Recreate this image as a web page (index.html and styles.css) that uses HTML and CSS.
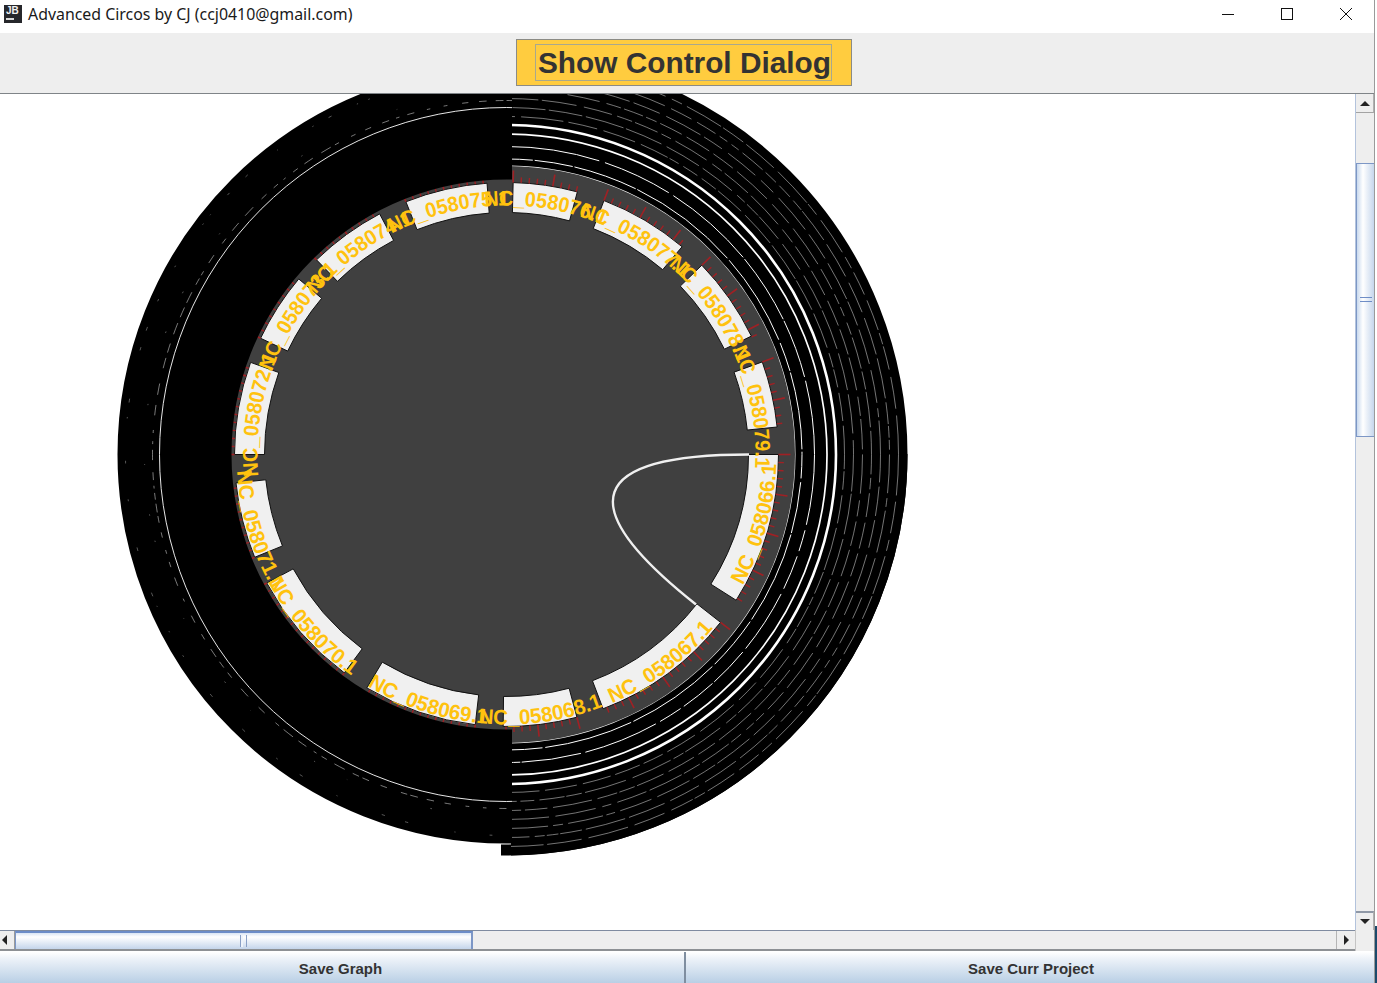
FILE: index.html
```html
<!DOCTYPE html>
<html lang="en">
<head>
    <meta charset="UTF-8">
    <title>Advanced Circos by CJ</title>
    <link rel="stylesheet" href="styles.css">
</head>
<body>
<div class="window">
    <div class="titlebar">
        <div class="app-icon"><span class="app-icon-text">JB</span><span class="app-icon-bar"></span></div>
        <div class="title-text">Advanced Circos by CJ (ccj0410@gmail.com)</div>
        <div class="win-buttons">
            <svg class="win-btn" width="14" height="14" viewBox="0 0 14 14"><path d="M1 7.5H13" stroke="#111" fill="none"/></svg>
            <svg class="win-btn" width="14" height="14" viewBox="0 0 14 14"><rect x="1.5" y="1.5" width="11" height="11" stroke="#111" fill="none"/></svg>
            <svg class="win-btn" width="14" height="14" viewBox="0 0 14 14"><path d="M1 1L13 13M13 1L1 13" stroke="#111" fill="none"/></svg>
        </div>
    </div>
    <div class="toolbar">
        <button class="control-button"><span class="control-label">Show Control Dialog</span></button>
    </div>
    <div class="scroll-pane">
        <div class="canvas">
            <svg id="circos" width="1355" height="836" viewBox="0 94 1355 836"></svg>
        </div>
        <div class="vbar">
            <div class="sb-btn sb-btn-up"><span class="arrow arrow-up"></span></div>
            <div class="vbar-gap-top"></div>
            <div class="vthumb"><span class="vgrip"></span></div>
            <div class="vbar-rest"></div>
            <div class="sb-btn sb-btn-down"><span class="arrow arrow-down"></span></div>
        </div>
        <div class="hbar">
            <div class="sb-btn sb-btn-left"><span class="arrow arrow-left"></span></div>
            <div class="hthumb"><span class="hgrip"></span></div>
            <div class="hbar-rest"></div>
            <div class="sb-btn sb-btn-right"><span class="arrow arrow-right"></span></div>
        </div>
        <div class="corner"></div>
    </div>
    <div class="bottom-buttons">
        <button class="save-button save-graph">Save Graph</button>
        <button class="save-button save-project">Save Curr Project</button>
    </div>
</div>
<div class="desktop-edge"></div>
<script src="script.js"></script>
</body>
</html>
```

FILE: styles.css
```css
* {
    box-sizing: border-box;
}

html, body {
    height: 100%;
}

body {
    margin: 0;
    display: flex;
    overflow: hidden;
    background-color: white;
    font-family: "Liberation Sans", Arial, sans-serif;
}

.window {
    width: 1375px;
    height: 983px;
    display: flex;
    flex-direction: column;
    border-right: 1px solid #9a9a9a;
}

.desktop-edge {
    width: 2px;
    height: 983px;
    background: linear-gradient(white 926px, #1b4a6b 926px);
}

/* title bar */
.titlebar {
    height: 33px;
    display: flex;
    align-items: center;
    padding-left: 4px;
    background-color: white;
}

.app-icon {
    width: 18px;
    height: 18px;
    margin-top: -5px;
    margin-right: 6px;
    background-color: #26272b;
    display: flex;
    flex-direction: column;
    padding: 1px 2px;
}

.app-icon-text {
    color: #f2f2f2;
    font-size: 10px;
    line-height: 10px;
    font-weight: bold;
}

.app-icon-bar {
    width: 8px;
    height: 2px;
    margin-top: 2px;
    background-color: #d8d8d8;
}

.title-text {
    flex: 1;
    margin-top: -6px;
    font-family: "Noto Sans", sans-serif;
    font-size: 15.9px;
    color: #1a1a1a;
}

.win-buttons {
    display: flex;
    gap: 45px;
    margin-top: -6px;
    padding-right: 21px;
}

.win-btn {
    display: block;
}

/* toolbar with yellow button */
.toolbar {
    height: 61px;
    display: flex;
    justify-content: center;
    padding: 6px 7px 7px 0;
    background-color: #eeeeee;
    border-bottom: 1px solid #7f8488;
}

.control-button {
    width: 336px;
    height: 47px;
    padding: 0;
    display: flex;
    align-items: center;
    justify-content: center;
    background-color: #ffcc3f;
    border: 1px solid #8b8b85;
    font-family: "Liberation Sans", Arial, sans-serif;
}

.control-label {
    display: block;
    height: 37px;
    padding: 0 0 0 2px;
    border: 1px solid #a8a88e;
    color: #333333;
    font-size: 29.8px;
    line-height: 36px;
    font-weight: bold;
    white-space: nowrap;
}

/* scroll pane */
.scroll-pane {
    flex: 1;
    display: grid;
    grid-template-columns: 1355px 19px;
    grid-template-rows: 836px 21px;
    min-height: 0;
}

.canvas {
    overflow: hidden;
    background-color: white;
}

#circos {
    display: block;
}

.seg-label {
    fill: #ffc20e;
    font-family: "Liberation Sans", Arial, sans-serif;
    font-size: 21px;
    font-weight: bold;
}

.vbar {
    display: flex;
    flex-direction: column;
    background-color: #eeeeee;
    border-left: 1px solid #b3c3dc;
}

.vbar-gap-top {
    height: 50px;
}

.vbar-rest {
    flex: 1;
}

.vthumb {
    height: 274px;
    display: flex;
    align-items: center;
    justify-content: center;
    background: linear-gradient(to right, #c9d9ee, #ffffff 35%, #c6d6ec);
    border: 1px solid #7d97c6;
    border-width: 1px 0 1px 1px;
}

.vgrip {
    width: 12px;
    height: 5px;
    margin-top: -1px;
    border-top: 1px solid #6f8dc6;
    border-bottom: 1px solid #6f8dc6;
}

.hbar {
    display: flex;
    background-color: #eeeeee;
    border-top: 1px solid #7f8ba0;
    border-bottom: 2px solid #8d9094;
}

.hthumb {
    width: 458px;
    display: flex;
    align-items: center;
    justify-content: center;
    background: linear-gradient(#d9e5f4, #ffffff 25%, #c4d5eb);
    border-left: 1px solid #7d97c6;
    border-right: 2px solid #7d97c6;
    border-top: 2px solid #6c8cc8;
}

.hgrip {
    width: 7px;
    height: 12px;
    border-left: 1px solid #8aa0c6;
    border-right: 1px solid #8aa0c6;
    box-shadow: inset 2px 0 0 #eef3fa;
}

.hbar-rest {
    flex: 1;
}

.corner {
    background-color: #eeeeee;
    border-left: 1px solid #c4c4c4;
}

.sb-btn {
    display: flex;
    align-items: center;
    justify-content: center;
    background-color: #eeeeee;
    flex-shrink: 0;
}

.sb-btn-up,
.sb-btn-down {
    height: 19px;
}

.sb-btn-up {
    border-bottom: 1px solid #a3a3a3;
    border-right: 1px solid #b0b0b0;
}

.sb-btn-down {
    border-top: 2px solid #8f98a6;
    border-right: 1px solid #b0b0b0;
}

.sb-btn-left {
    width: 15px;
    border-right: 1px solid #9a9a9a;
}

.sb-btn-right {
    width: 19px;
    border-left: 1px solid #b5b5b5;
}

.arrow {
    width: 0;
    height: 0;
    border-style: solid;
    border-color: transparent;
}

.arrow-up {
    border-width: 0 5px 5px 5px;
    border-bottom-color: #222;
}

.arrow-down {
    border-width: 5px 5px 0 5px;
    border-top-color: #222;
}

.arrow-left {
    border-width: 5px 5px 5px 0;
    border-right-color: #222;
    margin-right: 6px;
}

.arrow-right {
    border-width: 5px 0 5px 5px;
    border-left-color: #222;
}

/* save buttons */
.bottom-buttons {
    height: 32px;
    display: flex;
    padding-top: 1px;
    background-color: white;
}

.save-button {
    height: 31px;
    padding: 1px 0 0 0;
    border: none;
    background: linear-gradient(#ffffff, #eef3f9 20%, #b9cfe5);
    color: #333333;
    font-family: "Liberation Sans", Arial, sans-serif;
    font-size: 15px;
    font-weight: bold;
}

.save-graph {
    width: 686px;
    padding-right: 3px;
    border-right: 2px solid #7f8ea0;
}

.save-project {
    flex: 1;
    padding-left: 2px;
}
```

FILE: script.js
```js
// draws the circos plot into the svg
const NS = "http://www.w3.org/2000/svg";
const svg = document.getElementById("circos");
const CX = 506.5;
const CY = 454.5;

function el(name, attrs, parent) {
    const e = document.createElementNS(NS, name);
    for (const k in attrs) e.setAttribute(k, attrs[k]);
    (parent || svg).appendChild(e);
    return e;
}

function pt(r, deg) {
    const a = deg * Math.PI / 180;
    return [CX + r * Math.sin(a), CY - r * Math.cos(a)];
}

function arc(r, from, to) {
    const p0 = pt(r, from);
    const p1 = pt(r, to);
    const large = Math.abs(to - from) > 180 ? 1 : 0;
    const sweep = to > from ? 1 : 0;
    return `M${p0[0]} ${p0[1]}A${r} ${r} 0 ${large} ${sweep} ${p1[0]} ${p1[1]}`;
}

// name, segment start, segment end, label start angle
const segments = [
    ["NC_058076.1", 1.4, 15.1, 355],
    ["NC_058077.1", 21, 40.2, 17],
    ["NC_058078.1", 45.9, 64.2, 40.5],
    ["NC_058079.1", 70.1, 84.2, 65],
    ["NC_058066.1", 90, 122.4, 119],
    ["NC_058067.1", 128.1, 159.2, 157],
    ["NC_058068.1", 165, 180.7, 186],
    ["NC_058069.1", 186.6, 210.9, 211],
    ["NC_058070.1", 216.6, 241.8, 242],
    ["NC_058071.1", 247.8, 264, 266.5],
    ["NC_058072.1", 270, 289.8, 265],
    ["NC_058073.1", 295.3, 310.2, 289.5],
    ["NC_058074.1", 315.7, 332.2, 310],
    ["NC_058075.1", 338.3, 355.9, 332.5]
];

const defs = el("defs", {});
const clipRight = el("clipPath", {id: "clip-right"}, defs);
el("rect", {x: 511, y: 0, width: 900, height: 1000}, clipRight);
const clipLeft = el("clipPath", {id: "clip-left"}, defs);
el("rect", {x: 0, y: 0, width: 512, height: 1000}, clipLeft);
const clipLip = el("clipPath", {id: "clip-lip"}, defs);
el("rect", {x: 501, y: 454, width: 900, height: 600}, clipLip);

// dark disc
el("circle", {cx: CX, cy: CY, r: 288.5, fill: "#404040"});

// segments with ticks
segments.forEach(function (s) {
    const inner = pt(242, s[2]);
    const d = arc(272, s[1], s[2]) + `L${inner[0]} ${inner[1]}` + arc(242, s[2], s[1]).replace("M", "L") + "Z";
    el("path", {d: d, fill: "#f0f0f0", stroke: "#111", "stroke-width": 1});
    let n = 0;
    for (let a = s[1]; a <= s[2] + 0.2; a += 1.68) {
        const big = n % 5 === 0;
        const p0 = pt(272, a);
        const p1 = pt(big ? 284 : 277.5, a);
        el("line", {x1: p0[0], y1: p0[1], x2: p1[0], y2: p1[1], stroke: "#a02024", "stroke-width": big ? 1.6 : 1.4});
        n++;
    }
});

// link between the two segments
el("path", {d: `M749 454.5Q${CX} ${CY} 696 604.5`, fill: "none", stroke: "#f0f0f0", "stroke-width": 2.4});

// black tracks
el("circle", {cx: CX, cy: CY, r: 395.5, fill: "none", stroke: "#000", "stroke-width": 11, "clip-path": "url(#clip-lip)"});
const right = el("g", {"clip-path": "url(#clip-right)"});
el("circle", {cx: CX, cy: CY, r: 345, fill: "none", stroke: "#000", "stroke-width": 112}, right);
const left = el("g", {"clip-path": "url(#clip-left)"});
el("circle", {cx: CX, cy: CY, r: 332, fill: "none", stroke: "#000", "stroke-width": 114}, left);

// small repeatable random for the broken white lines
let seed = 7;
function rnd() {
    seed = (seed * 16807) % 2147483647;
    return seed / 2147483647;
}

function dashes(on, off) {
    const out = [];
    for (let i = 0; i < 60; i++) {
        out.push((on * (0.4 + rnd() * 1.6)).toFixed(1));
        out.push((off * (0.4 + rnd() * 1.6)).toFixed(1));
    }
    return out.join(" ");
}

function ring(parent, r, width, on, off, opacity) {
    const attrs = {cx: CX, cy: CY, r: r, fill: "none", stroke: "#fff", "stroke-width": width, "stroke-opacity": opacity};
    if (on) attrs["stroke-dasharray"] = dashes(on, off);
    el("circle", attrs, parent);
}

ring(right, 295.5, 1, 60, 2, 1);
ring(right, 308, 1, 50, 3, 1);
ring(right, 320.5, 1.7, 0, 0, 1);
ring(right, 329.5, 2.6, 0, 0, 1);
[338, 347, 356, 365, 374, 383, 392].forEach(function (r) {
    ring(right, r, 0.7, 22, 4, 0.65);
});

ring(left, 347, 1, 0, 0, 0.9);
ring(left, 354, 0.8, 6, 8, 0.6);
ring(left, 362, 0.7, 1, 60, 0.5);
ring(left, 381, 0.7, 2, 25, 0.5);

// labels, clockwise on the top half and counter clockwise on the bottom half
segments.forEach(function (s, i) {
    const mid = (s[1] + s[2]) / 2;
    const bottom = mid > 90 && mid < 265;
    const d = bottom ? arc(270, s[3], s[3] - 40) : arc(249, s[3], s[3] + 40);
    el("path", {id: "lab" + i, d: d, fill: "none"}, defs);
    const t = el("text", {class: "seg-label"});
    const tp = el("textPath", {href: "#lab" + i, textLength: bottom ? 127 : 122, lengthAdjust: "spacingAndGlyphs"}, t);
    tp.textContent = s[0];
});
```
